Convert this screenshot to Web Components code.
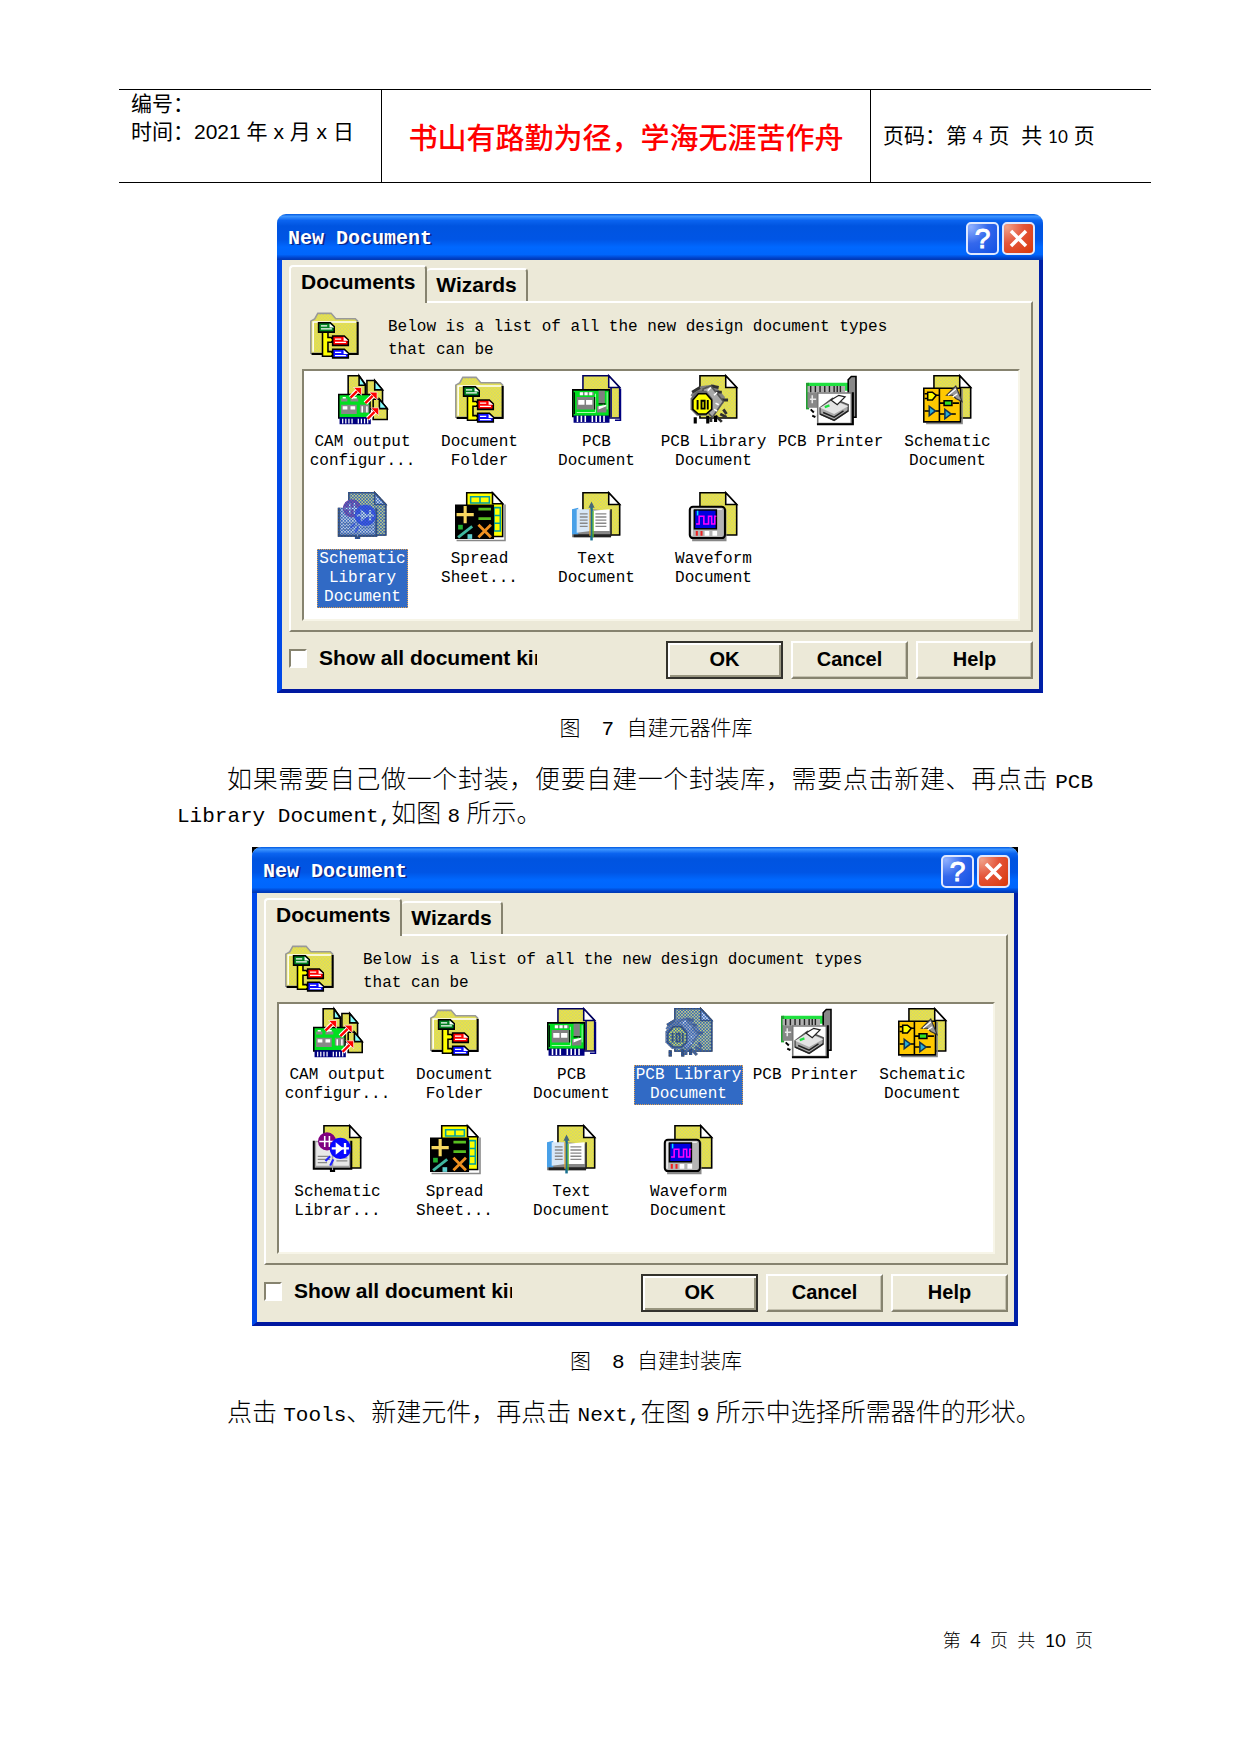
<!DOCTYPE html>
<html lang="zh-CN">
<head>
<meta charset="utf-8">
<title>New Document</title>
<style>
  body {
    margin: 0;
    background: #fff;
    color: #000;
    font-family: "Liberation Serif", "Noto Sans CJK SC", serif;
  }
</style>
</head>
<body>
<doc-page>
  <page-header slot="header"></page-header>

  <doc-figure indented>
    <new-document-dialog selected="schlib"></new-document-dialog>
    <span slot="caption">图　7 自建元器件库</span>
  </doc-figure>

  <doc-paragraph>如果需要自己做一个封装，便要自建一个封装库，需要点击新建、再点击 <span>PCB Library Document,</span>如图 <span>8</span> 所示。</doc-paragraph>

  <doc-figure>
    <new-document-dialog selected="pcblib" corner="black"></new-document-dialog>
    <span slot="caption">图　8 自建封装库</span>
  </doc-figure>

  <doc-paragraph>点击 <span>Tools</span>、新建元件，再点击 <span>Next,</span>在图 <span>9</span> 所示中选择所需器件的形状。</doc-paragraph>

  <page-number slot="footer"></page-number>
</doc-page>

<script>
const makeTemplate = (html) => {
  const template = document.createElement('template');
  template.innerHTML = html;
  return template;
};

class BaseElement extends HTMLElement {
  constructor() {
    super();
    this.attachShadow({ mode: 'open' });
    this.shadowRoot.appendChild(this.constructor.template.content.cloneNode(true));
  }
}

// ---- document page ----

class DocPage extends BaseElement {
  static template = makeTemplate(`
    <style>
      :host {
        display: flex;
        flex-direction: column;
        box-sizing: border-box;
        min-height: 100vh;
        padding: 89px 0 98px;
      }
      main {
        display: flex;
        flex-direction: column;
        gap: 16px;
        padding: 31px 148px 0 177px;
      }
      footer {
        margin-top: auto;
        padding: 0 148px 0 177px;
      }
    </style>
    <slot name="header"></slot>
    <main><slot></slot></main>
    <footer><slot name="footer"></slot></footer>
  `);
}

class PageHeader extends BaseElement {
  static template = makeTemplate(`
    <style>
      :host {
        display: block;
        margin: 0 90px 0 119px;
        font: 21px/28px "Liberation Sans", "Noto Sans CJK SC", sans-serif;
      }
      table {
        width: 100%;
        border-collapse: collapse;
        table-layout: fixed;
        border-top: 1px solid #000;
        border-bottom: 1px solid #000;
      }
      td {
        height: 92px;
        padding: 0 12px;
        white-space: nowrap;
      }
      td + td { border-left: 1px solid #000; }
      .date {
        width: 238px;
        vertical-align: top;
      }
      .motto {
        width: 464px;
        text-align: center;
        color: #f00;
        font: 500 29px/36px "Noto Sans CJK SC", sans-serif;
      }
      .num { font: 17px "Lato", sans-serif; }
    </style>
    <table>
      <tr>
        <td class="date">编号：<br>时间：2021 年 x 月 x 日</td>
        <td class="motto">书山有路勤为径，学海无涯苦作舟</td>
        <td>页码：第 <span class="num">4</span> 页&nbsp; 共 <span class="num">10</span> 页</td>
      </tr>
    </table>
  `);
}

class PageNumber extends BaseElement {
  static template = makeTemplate(`
    <style>
      :host {
        display: block;
        text-align: right;
        font: 300 18px/34px "Noto Sans", "Noto Sans CJK SC", sans-serif;
      }
      span { font-family: "Lato", sans-serif; font-weight: 400; }
    </style>
    第&nbsp; <span>4</span>&nbsp; 页&nbsp; 共&nbsp; <span>10</span>&nbsp; 页
  `);
}

class DocParagraph extends BaseElement {
  static template = makeTemplate(`
    <style>
      :host {
        display: block;
        text-indent: 50px;
        text-align: justify;
        font-size: 25px;
        font-weight: 300;
        line-height: 34px;
      }
      ::slotted(span) {
        font-family: "Liberation Mono", monospace;
        font-size: 21px;
        line-height: 21px;
      }
    </style>
    <slot></slot>
  `);
}

class DocFigure extends BaseElement {
  static template = makeTemplate(`
    <style>
      :host { display: block; }
      figure {
        display: flex;
        flex-direction: column;
        align-items: center;
        gap: 20px;
        margin: 0;
      }
      .body, figcaption { box-sizing: border-box; width: 100%; }
      .body { display: flex; justify-content: center; }
      :host([indented]) .body { padding-left: 50px; }
      figcaption {
        padding-left: 42px;
        text-align: center;
        font: 300 21px/34px "Liberation Mono", "Noto Sans CJK SC", monospace;
      }
    </style>
    <figure>
      <div class="body"><slot></slot></div>
      <figcaption><slot name="caption"></slot></figcaption>
    </figure>
  `);
}

// ---- icons, drawn on a 32x32 grid ----

const sheet = (edge = '#000') => `
  <path d="M8 31V1h16l7 7v20H8z" transform="translate(0 -.5)" fill="#a8a8a8" opacity=".6"/>
  <path d="M7 .5h16.500l7 7.500v19.500H7z" fill="url(#dither)" stroke="${edge}"/>
  <path d="M23.500 .5V8h7z" fill="#fff" stroke="${edge}"/>`;

const folder = `
  <path d="M.5 27V6.500L3 5l2-3.500h8.500L16.500 5H29l1.500 1.500V27z" fill="url(#dither)" stroke="#999"/>
  <path d="M1.500 7h28M2 7v19" stroke="#fff" fill="none"/>
  <path d="M1 27.500h29.500V7" fill="none" stroke="#000" stroke-width="1.300"/>
  <path d="M8 13h3.500v4H14v3h-2.500v6H14v3H8z" fill="#ff0" stroke="#000"/>
  <path d="M11.500 18.500H15M11.500 27.500H15" stroke="#ff0"/>
  <g stroke="#000">
    <path d="M5.500 7.500h7.500l2.500 2.500v3.500h-10z" fill="#008020"/>
    <path d="M14.500 16h7.500l2.500 2.500v3.500h-10z" fill="#f00"/>
    <path d="M14.500 24.500h7.500l2.500 2.500v3h-10z" fill="#1010ff"/>
  </g>
  <path d="M7 9.500h4M7 11.500h7M16 18h4M16 20h7M16 26.500h4M16 28.500h7" stroke="#fff" stroke-width=".8"/>
  <path d="M12.500 8l3 2.500h-3zM21.500 16.500l3 2.500h-3zM21.500 25l3 2.500h-3z" fill="#fff"/>`;

const icons = {
  folder,
  cam: `
    <g stroke="#000">
      <path d="M6.500 .5h7l4 5.500v14h-11z" fill="url(#dither)"/>
      <path d="M13.500 .5v6h4z" fill="#8ff"/>
      <path d="M18.500 3.500h5l5 6v12h-10z" fill="url(#dither)"/>
      <path d="M23.500 3.500v6h5z" fill="#8ff"/>
      <path d="M22.500 15.500h4l5 6v7h-9z" fill="url(#dither)"/>
      <path d="M26.500 15.500v6h5z" fill="#8ff"/>
      <path d="M.5 12.500h20v15H.5z" fill="#00e020"/>
    </g>
    <path d="M2 15h4v2H2zM8 15h5v2H8zM2 19h10v6H2zM14 19h6v5h-6z" fill="#888"/>
    <path d="M3 20h3v2H3zM8 20h3v2H8zM15 20h1v4h-1zM18 20h1v4h-1zM3 14h2v1H3zM9 14h3v1H9z" fill="#fff"/>
    <path d="M1 27h20v4.500H1z" fill="#000080"/>
    <path d="M3 28v3M5 28v3M7 28v3M9 28v3M13 28v3M15 28v3M17 28v3M19 28v3" stroke="#fff" stroke-width=".8"/>
    <path d="M8 14.500l5-5M17.500 18l5-5M19 28l5-5" stroke="#fff" stroke-width="3"/>
    <path d="M8 14.500l5-5M17.500 18l5-5M19 28l5-5" stroke="#f00" stroke-width="1.500"/>
    <path d="M10 8h5v5zM20 11h5v5zM21 21h5v5z" fill="#f00" stroke="#fff" stroke-width=".4"/>`,
  pcb: `${sheet('#000060')}
    <path d="M25 8v19M27.500 29H31V9" fill="none" stroke="#000080"/>
    <path d="M.5 9.500h23.500v17H.5z" fill="#00e020" stroke="#000"/>
    <path d="M3 14h11v8H3zM17 10h4v8h-4zM16 20h6v4h-6zM5 11h9v2H5z" fill="#808080"/>
    <path d="M4 16h4v3H4zM9 16h4v3H9zM5 11h2v2H5zM8 11h2v2H8zM11 11h2v2h-2zM17 20l5-1v1l-5 2z" fill="#fff"/>
    <path d="M15 12v12M22.500 11v11M3 24h12M20 18v2" stroke="#b8ffb8" stroke-width=".6"/>
    <path d="M1.500 11v14M17 18.500h4.500M14.500 14v8" stroke="#000" stroke-width=".7"/>
    <path d="M1 26h23v4.500H1z" fill="#000080"/>
    <path d="M3.500 26v4M6 26v4M8.500 26v4M13 26v4M15.500 26v4M18 26v4M20.500 26v4" stroke="#fff"/>`,
  pcblib: `${sheet()}
    <path d="M1 13l3-4 4-2 8-1 7 8-1 4-9 7z" fill="#808080"/>
    <path d="M2 11l5-3M5 14l7-6M14 7l5 1M17 11h4M21 16h4M22 22l2 3M17 26l4 4M14 27v3M20 25l4 2" stroke="#303030" stroke-width="1.800"/>
    <path d="M9 9l5-2 8 10-7 10-5-5z" fill="#a8a8a8" stroke="#555"/>
    <path d="M12 10l2-2M16 13l2-2M17 18l2 1M16 22l2 1" stroke="#fff"/>
    <path d="M5 10h6l4 5v7l-4 4H5l-4-4v-7z" fill="#666"/>
    <path d="M6 12h5l3.500 4v6L11 25H6l-3.500-3v-6z" fill="#ff0" stroke="#000"/>
    <path d="M5.500 16v6M8 16.500h2v5H8zM12 16v6" fill="none" stroke="#000" stroke-width="1.200"/>
    <path d="M4 27v4M12 26v5M17 26v4" stroke="#000" stroke-width="2"/>`,
  printer: `
    <path d="M1 5h26v5H1z" fill="#20e040"/>
    <path d="M1 5v17" stroke="#20a030" stroke-width="2"/>
    <path d="M1 11h7v10H1z" fill="#888"/>
    <path d="M1 7h24v4H1z" fill="#b0b0b0"/>
    <path d="M3 7v4M6 7v4M9 7v4M12 7v4M15 7v4M18 7v4M20 7v4M22 7v4" stroke="#222" stroke-width=".9"/>
    <path d="M4 13v5M2.500 15.500h4M3 23h3M4 26h3" stroke="#e8e8e8"/>
    <path d="M3 22l2 2M4 26l2 1" stroke="#000" stroke-width="1.200"/>
    <path d="M27 3l2-2h3v26h-5z" fill="#888" stroke="#000"/>
    <path d="M7.500 11.500H29V31H7.500z" fill="#fff" stroke="#777"/>
    <path d="M7 31.500h23V11" fill="none" stroke="#000" stroke-width="1.300"/>
    <path d="M9 21l8-6 10 4v4l-9 6-9-4z" fill="#aaa" stroke="#555"/>
    <path d="M9 21l8-5 10 4-9 5z" fill="#e4e4e4"/>
    <path d="M16 16l5-3 4 1-5 5z" fill="#fff" stroke="#222" stroke-width=".8"/>
    <path d="M9 25l9 4 9-6M11 24l7 3 6-4" fill="none" stroke="#222" stroke-width=".9"/>
    <path d="M12 20.500l3-1" stroke="#20e040" stroke-width="1.500"/>`,
  schematic: `${sheet()}
    <path d="M2 31h23V9" fill="none" stroke="#888"/>
    <path d="M.5 8.500h23.500v21.500H.5z" fill="#ffc800" stroke="#000"/>
    <path d="M10.500 9v21M1 12h2M8 13h3M1 23h3M8 23h3M11 18h3M19 18h4M10 25h4M18 25h3M1 15h2" stroke="#000"/>
    <path d="M3 11h3l2.500 2L6 16H3z" fill="#ff0" stroke="#000"/>
    <path d="M4 20l4 3-4 3zM14 22l4 3-4 3z" fill="#28b0d8" stroke="#135"/>
    <path d="M13.500 16.500h5v3h-5z" fill="#30e020" stroke="#000"/>
    <path d="M15 13l6-6 4 10-4-2-2-2z" fill="#999" stroke="#333" stroke-width=".7"/>
    <path d="M16 13l5-4M19 14l3-2" stroke="#fff" stroke-width=".8"/>`,
  schlib: `${sheet()}
    <path d="M1 10h23l1 18H13l-1 2-2-2H1z" fill="#a0a0a0"/>
    <path d="M2 11h10v15H2zM13 11h10v15H13z" fill="#e8e8e8"/>
    <path d="M3 20h7M3 22h8M3 24h6M15 21h7M15 23h7" stroke="#888" stroke-width=".8"/>
    <path d="M.5 10v18h11v1.500h2V28h11V10" fill="none" stroke="#000" stroke-width="1.300"/>
    <circle cx="9" cy="10.500" r="5.800" fill="#800080"/>
    <path d="M4 10.500h10M7.500 7v7M10.500 7v7" stroke="#fff"/>
    <circle cx="17.500" cy="15" r="6.800" fill="#0808ff"/>
    <path d="M12 15h11M20.500 11.500v7" stroke="#fff" stroke-width="1.500"/>
    <path d="M14.500 11l5 4-5 4z" fill="#fff"/>
    <path d="M8 23l3-3M11 26l2-4" stroke="#2020ff" stroke-width="1.400"/>`,
  spread: `
    <path d="M7.500 .5H24l6.500 7v21h-23z" fill="#ff0" stroke="#000"/>
    <path d="M10 3h6v4h-6zM16 3h6v4h-6zM25 10h4v5h-4zM25 15h4v5h-4zM25 20h4v5h-4z" fill="none" stroke="#00a0a0"/>
    <path d="M24 .5v7h6.500z" fill="#fff" stroke="#000"/>
    <path d="M1 31h31V8" fill="none" stroke="#888"/>
    <path d="M0 8h25v22H0z"/>
    <path d="M6.500 9v11M1 14.500h11" stroke="#f8d860" stroke-width="2"/>
    <path d="M15 11h8M15 17h8" stroke="#58c020" stroke-width="1.800"/>
    <path d="M2 29L11 22" stroke="#40b8a0" stroke-width="1.800"/>
    <path d="M2 21h3v3H2z" fill="#20b030"/>
    <path d="M8 27h3v3H8z" fill="#60d0d0"/>
    <path d="M15 21l8 8M23 21l-8 8" stroke="#f09020" stroke-width="1.800"/>`,
  text: `${sheet()}
    <path d="M0 12l12-1 13 1v17H0z" fill="#888"/>
    <path d="M1 27h24v2H1z" fill="#222"/>
    <path d="M0 11l4-1v17H0z" fill="#48a0e8"/>
    <path d="M3 11h9v14l-9 1z" fill="#d8e8f8"/>
    <path d="M13 12l11-1v14H13z" fill="#fff"/>
    <path d="M5 14h5M5 16h5M5 18h5M5 20h5M5 22h5M15 14h7M15 16h7M15 18h7M15 20h7M15 22h7" stroke="#888" stroke-width=".9"/>
    <path d="M25 11v17" stroke="#222"/>
    <path d="M12.500 8v23" stroke="#187090" stroke-width="1.600"/>
    <path d="M11.500 11v17" stroke="#e0a030" stroke-width=".8"/>
    <path d="M13.500 12v17" stroke="#60b820" stroke-width=".8"/>
    <path d="M10.500 10l2-4 2 4z" fill="#486878"/>`,
  waveform: `${sheet()}
    <path d="M2 30.500h21V11" fill="none" stroke="#888" stroke-width="2"/>
    <rect x=".5" y="9.500" width="22.500" height="20" rx="2" fill="#b4b4b4" stroke="#000" stroke-width="1.300"/>
    <path d="M2 28V11h19" fill="none" stroke="#eee"/>
    <path d="M3.500 11.500h14v12h-14z" fill="#0000e0" stroke="#000"/>
    <path d="M4.500 20.500h2v-5h3v5h3v-5h2v5h2v-5h1" fill="none" stroke="#f0f"/>
    <path d="M5.500 12v3" stroke="#00e0ff"/>
    <path d="M5 25v3M8 25v3" stroke="#f02020" stroke-width="1.300"/>
    <path d="M10 25h3v3h-3zM15 25h3v3h-3z" fill="#fff"/>`,
};

class DocIcon extends BaseElement {
  static template = makeTemplate(`
    <style>
      :host { display: block; width: 50px; height: 50px; }
      svg { display: block; width: 100%; height: 100%; overflow: visible; }
    </style>
    <svg viewBox="0 0 32 32" aria-hidden="true">
      <defs>
        <pattern id="dither" width="2" height="2" patternUnits="userSpaceOnUse">
          <path d="M0 0h2v2H0z" fill="#ebe740"/>
          <path d="M0 0h1v1H0zM1 1h1v1H1z" fill="#d5d36c"/>
        </pattern>
        <pattern id="dots" width="2" height="2" patternUnits="userSpaceOnUse">
          <path d="M0 0h2v2H0z" fill="#88a8dc" fill-opacity=".45"/>
          <path d="M0 0h1v1H0zM1 1h1v1H1z" fill="#2458b4" fill-opacity=".85"/>
        </pattern>
        <mask id="shape" style="mask-type: alpha"><g class="art"></g></mask>
      </defs>
      <g class="art"></g>
      <path class="veil" d="M0 0h32v32H0z" fill="url(#dots)" mask="url(#shape)" visibility="hidden"/>
    </svg>
  `);

  static observedAttributes = ['name', 'selected'];

  attributeChangedCallback() {
    for (const art of this.shadowRoot.querySelectorAll('.art')) {
      art.innerHTML = icons[this.getAttribute('name')] || '';
    }
    this.shadowRoot.querySelector('.veil')
      .setAttribute('visibility', this.hasAttribute('selected') ? 'visible' : 'hidden');
  }
}

class DocItem extends BaseElement {
  static template = makeTemplate(`
    <style>
      :host {
        display: flex;
        flex-direction: column;
        align-items: center;
        gap: 7px;
      }
      .label {
        padding: 1px 2px;
        text-align: center;
        white-space: nowrap;
        font: 16px/19px "Liberation Mono", monospace;
      }
      :host([selected]) .label {
        background: #316ac5;
        color: #fff;
        outline: 1px dotted #e0a050;
        outline-offset: -1px;
      }
    </style>
    <doc-icon></doc-icon>
    <div class="label"><slot></slot></div>
  `);

  static observedAttributes = ['icon', 'selected'];

  attributeChangedCallback() {
    const icon = this.shadowRoot.querySelector('doc-icon');
    icon.setAttribute('name', this.getAttribute('icon'));
    icon.toggleAttribute('selected', this.hasAttribute('selected'));
  }
}

// ---- dialog parts ----

class XpButton extends BaseElement {
  static template = makeTemplate(`
    <style>
      :host { display: block; }
      button {
        display: block;
        box-sizing: border-box;
        width: 117px;
        height: 38px;
        padding: 0 0 2px;
        border: 2px solid;
        border-color: #fff #86836f #86836f #fff;
        border-radius: 0;
        background: #ece9d8;
        box-shadow: inset -1px -1px #c5c2b0;
        color: #000;
        font: bold 20px/24px "Liberation Sans", sans-serif;
      }
      :host([default]) button {
        border-color: #33322c;
        box-shadow: inset 2px 2px #fff, inset -2px -2px #98957f;
      }
    </style>
    <button type="button"><slot></slot></button>
  `);
}

class NewDocumentDialog extends BaseElement {
  static template = makeTemplate(`
    <style>
      :host {
        display: block;
        width: 100%;
        max-width: 766px;
        background: #fff;
      }
      :host([corner="black"]) { background: #000; }
      .window {
        overflow: hidden;
        border-radius: 9px 9px 0 0;
        background: #ece9d8;
      }
      .title {
        display: flex;
        align-items: center;
        gap: 3px;
        box-sizing: border-box;
        height: 46px;
        padding: 3px 8px 0 11px;
        background: linear-gradient(#0058e0, #3d95ff 5%, #0b64f0 14%, #0054e0 26%, #0055e5 55%, #0068ff 72%, #0066fc 88%, #0040c8 96%, #0038b0);
        color: #fff;
      }
      h2 {
        flex: 1;
        margin: 0;
        font: bold 20px/24px "Liberation Mono", monospace;
        text-shadow: 2px 1px #0a2a90;
      }
      .title button {
        display: grid;
        place-items: center;
        width: 33px;
        height: 33px;
        padding: 0;
        border: 2px solid #dfe8ff;
        border-radius: 5px;
        color: #fff;
        font: 28px/28px "Liberation Sans", sans-serif;
        -webkit-text-stroke: 1px #fff;
      }
      .help { background: radial-gradient(circle at 10% 10%, #8fb0ff, #3468ec 45%, #1250e4); }
      .close { background: radial-gradient(circle at 10% 10%, #f0a088, #e4553a 45%, #d83808); }
      .client {
        padding: 5px 6px 10px 7px;
        border: solid;
        border-width: 0 4px 4px 5px;
        border-color: #0040dc #0020a8 #0018a0 #0048e8;
      }
      .tabs { display: flex; align-items: flex-end; height: 36px; }
      .tabs button {
        box-sizing: border-box;
        height: 33px;
        min-width: 101px;
        padding: 0 8px 2px;
        border: solid;
        border-width: 2px 2px 0 0;
        border-color: #fff #86836f #fff #fff;
        border-radius: 4px 4px 0 0;
        background: #ece9d8;
        color: #000;
        font: bold 21px/28px "Liberation Sans", sans-serif;
      }
      .tabs .active {
        width: 138px;
        height: 38px;
        margin-bottom: -2px;
        padding: 0 10px 6px;
        border-left-width: 2px;
        z-index: 1;
      }
      .panel {
        padding: 8px 11px 9px;
        border: 2px solid;
        border-color: #fff #86836f #86836f #fff;
      }
      .intro {
        display: flex;
        gap: 28px;
        height: 58px;
        padding: 0 8px;
      }
      p {
        margin: 5px 0 0;
        max-width: 510px;
        font: 16px/23px "Liberation Mono", monospace;
      }
      .list {
        display: grid;
        grid-template-columns: repeat(6, minmax(0, 117px));
        grid-auto-rows: 117px;
        box-sizing: border-box;
        height: 252px;
        padding-top: 4px;
        border: 2px solid;
        border-color: #86836f #f7f5e8 #f7f5e8 #86836f;
        background: #fff;
      }
      .actions {
        display: flex;
        align-items: center;
        gap: 8px;
        margin-top: 9px;
      }
      label {
        display: flex;
        align-items: center;
        gap: 12px;
        margin: 0 auto 4px 0;
        font: bold 21px/28px "Liberation Sans", sans-serif;
      }
      label span { width: 218px; overflow: hidden; white-space: nowrap; }
      input {
        appearance: none;
        width: 18px;
        height: 19px;
        margin: 0;
        border: 2px solid;
        border-color: #86836f #fff #fff #86836f;
        background: #fff;
      }
    </style>
    <section class="window">
      <div class="title">
        <h2>New Document</h2>
        <button class="help" type="button">?</button>
        <button class="close" type="button" aria-label="Close">
          <svg width="21" height="21" viewBox="0 0 21 21"><path d="M3 3l15 15M18 3L3 18" stroke="#fff" stroke-width="3.500"/></svg>
        </button>
      </div>
      <div class="client">
        <div class="tabs" role="tablist">
          <button class="active" type="button" role="tab" aria-selected="true">Documents</button>
          <button type="button" role="tab">Wizards</button>
        </div>
        <div class="panel">
          <div class="intro">
            <doc-icon name="folder"></doc-icon>
            <p>Below is a list of all the new design document types that can be</p>
          </div>
          <div class="list">
            <doc-item icon="cam">CAM output<br>configur...</doc-item>
            <doc-item icon="folder">Document<br>Folder</doc-item>
            <doc-item icon="pcb">PCB<br>Document</doc-item>
            <doc-item icon="pcblib">PCB Library<br>Document</doc-item>
            <doc-item icon="printer">PCB Printer</doc-item>
            <doc-item icon="schematic">Schematic<br>Document</doc-item>
            <doc-item icon="schlib">Schematic<br>Librar...</doc-item>
            <doc-item icon="spread">Spread<br>Sheet...</doc-item>
            <doc-item icon="text">Text<br>Document</doc-item>
            <doc-item icon="waveform">Waveform<br>Document</doc-item>
          </div>
        </div>
        <div class="actions">
          <label><input type="checkbox"><span>Show all document kin</span></label>
          <xp-button default>OK</xp-button>
          <xp-button>Cancel</xp-button>
          <xp-button>Help</xp-button>
        </div>
      </div>
    </section>
  `);

  connectedCallback() {
    const name = this.getAttribute('selected');
    const item = this.shadowRoot.querySelector(`doc-item[icon="${name}"]`);
    item.setAttribute('selected', '');
    // the selected item shows its full name
    if (name === 'schlib') item.innerHTML = 'Schematic<br>Library<br>Document';
  }
}

customElements.define('doc-icon', DocIcon);
customElements.define('doc-item', DocItem);
customElements.define('xp-button', XpButton);
customElements.define('new-document-dialog', NewDocumentDialog);
customElements.define('doc-figure', DocFigure);
customElements.define('doc-paragraph', DocParagraph);
customElements.define('page-header', PageHeader);
customElements.define('page-number', PageNumber);
customElements.define('doc-page', DocPage);
</script>
</body>
</html>
